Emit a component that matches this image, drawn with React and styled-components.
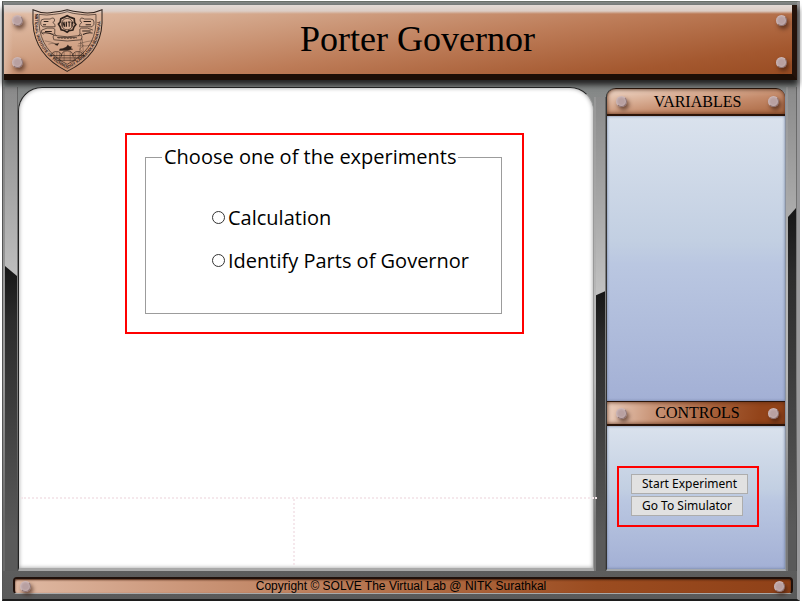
import React, { useState } from "react";
import styled, { createGlobalStyle, css } from "styled-components";

const GlobalStyle = createGlobalStyle`
  * { box-sizing: border-box; }
  body { margin: 0; background: #fff; color: #000; }
`;

const serif = '"Liberation Serif", "Times New Roman", serif';
const hand = '"Comic Sans MS", "Open Sans", "Noto Sans", cursive';
const ui = 'Tahoma, "Noto Sans", "DejaVu Sans Condensed", sans-serif';

const Page = styled.div`
  min-height: 100vh;
  padding: 1px 2px 2px;
  display: flex;
`;

const Frame = styled.div`
  flex: 1;
  min-width: 0;
  display: flex;
  flex-direction: column;
  border: 1px solid #555;
  border-top: 1px solid #6c726c;
  border-right: 3px solid #99999b;
  border-bottom: 2px solid #1c1c1c;
  background: linear-gradient(#858988 0, #858988 80px, #8a8a8a 120px, #5a5a5a 100%);
`;

const Header = styled.header`
  height: 75px;
  margin: 3px 0 0 1px;
  display: flex;
  align-items: flex-start;
  gap: 9px;
  padding: 4px 5px 0 8px;
  border-bottom: 6px solid #1d0e06;
  border-right: 5px solid #24120a;
  background:
    linear-gradient(#e3dad6 0, #dccdc5 6px, transparent 9px),
    linear-gradient(90deg, #e8cdbd88 0, transparent 9px),
    linear-gradient(172deg, #e6c4ae 0%, #d6ab90 22%, #bd7c58 56%, #a4582f 85%, #994c22 100%);
  box-shadow: 0 4px 6px 1px #222;
  position: relative;
`;

const Rivets = styled.div`
  height: 60px;
  padding: 6px 0 1px;
  display: flex;
  flex-direction: column;
  justify-content: space-between;
`;

const Rivet = styled.span`
  flex: none;
  width: 11px;
  height: 11px;
  border-radius: 50%;
  border: 1px solid #8d7475;
  border-top-color: #cbb6b7;
  border-left-color: #c8b3b4;
  background: radial-gradient(circle at 50% 50%, #b8a0a1 40%, #c4afb0 75%);
  box-shadow: 2px 3px 4px #3a1c10aa;
`;

const Crest = styled.svg`
  flex: none;
  width: 71px;
  height: 63px;
`;

const Title = styled.h1`
  flex: 1;
  margin: 0;
  padding-right: 44px;
  padding-top: 10px;
  font: 400 36px/40px ${serif};
  text-align: center;
`;

const Body = styled.div`
  flex: 1;
  display: grid;
  grid-template-columns: 15px minmax(0, 1fr) 12px 180px 11px;
  padding-top: 7px;
`;

const Gutter = styled.div`
  margin-top: ${(p) => (p.$side === "middle" ? 10 : 0)}px;
  border-left: 2px solid ${(p) => (p.$side === "left" ? "#77777788" : "#aaaaaa66")};
  border-right: 1px solid #44444488;
  background: linear-gradient(#8a8a8a 0, #a6a6a6 22%, #c2c2c2 42%, #c2c2c2 60%, #5a5a5a 90%);
  display: flex;
  flex-direction: column;
  justify-content: flex-end;
`;

const slopes = {
  left: "polygon(0 0, 100% 10px, 100% 100%, 0 100%)",
  middle: "polygon(0 4px, 100% 0, 100% 100%, 0 100%)",
  right: "polygon(0 9px, 100% 0, 100% 100%, 0 100%)",
};
const depths = { left: "63%", middle: "59%", right: "75%" };

const Shade = styled.div`
  height: ${(p) => depths[p.$side]};
  clip-path: ${(p) => slopes[p.$side]};
  background: linear-gradient(#161616 0, #2c2c2c 18%, #3c3c3c 45%, #5a5a5a 88%);
`;

const Board = styled.main`
  display: flex;
  flex-direction: column;
  border: 1px solid #222;
  border-bottom: 3px solid #a9a9a9;
  border-right-color: #999;
  border-radius: 24px 24px 0 0;
  background: #fff;
  box-shadow: inset 0 0 4px #999;
  position: relative;
  z-index: 1;
`;

const Workspace = styled.div`
  flex: 1;
  padding: 45px 0 0 106px;
`;

const highlight = css`
  border: 2px solid #f00;
`;

const Choice = styled.form`
  ${highlight}
  width: 399px;
  max-width: 100%;
  height: 201px;
  padding: 11px 20px 19px 18px;
`;

const Options = styled.fieldset`
  height: 168px;
  min-width: 0;
  margin: 0;
  padding: 28px 0 0 66px;
  border: 1px solid #9c9c9c;
  font: 400 20px/22px ${hand};
`;

const Legend = styled.legend`
  margin-left: -50px;
  padding: 0 2px;
`;

const Option = styled.label`
  display: flex;
  align-items: center;
  gap: 3px;
  height: 43px;
  white-space: nowrap;
`;

const Radio = styled.input`
  appearance: none;
  flex: none;
  width: 13px;
  height: 13px;
  margin: 0;
  border: 1px solid #333;
  border-radius: 50%;
  background: #fff;
  &:checked { background: radial-gradient(circle, #222 40%, #fff 50%); }
`;

const Notes = styled.div`
  height: 71px;
  margin: 0 -4px 0 2px;
  border-top: 2px dotted #f5e8ec;
`;

const NotesColumn = styled.div`
  width: 274px;
  height: 66px;
  border-right: 2px dotted #f5e8ec;
`;

const Sidebar = styled.aside`
  display: flex;
  flex-direction: column;
  margin-top: 1px;
  border-left: 1px solid #333;
  border-bottom: 2px solid #a4a8ae;
  border-right: 1px solid #8b929f;
  border-radius: 9px 9px 0 0;
`;

const Plate = styled.h2`
  margin: 0;
  height: ${(p) => (p.$top ? 28 : 25)}px;
  padding: 0 6px 0 9px;
  display: flex;
  align-items: center;
  justify-content: space-between;
  border: 2px solid #2b1408;
  border-width: 1px 0 2px;
  border-radius: ${(p) => (p.$top ? "9px 9px 0 0" : "0")};
  font: 400 16px/20px ${serif};
  background: ${(p) =>
    p.$top
      ? "linear-gradient(172deg, #efd9cb 0%, #dcb49c 28%, #c48a6a 60%, #a9663f 100%)"
      : "linear-gradient(100deg, #ecd0bf 0%, #c99578 26%, #a65f38 60%, #93441a 85%)"};
  box-shadow: inset 0 0 4px #5a2c14;
`;

const Pane = styled.section`
  flex: ${(p) => (p.$fill ? "1" : "none")};
  height: ${(p) => (p.$fill ? "auto" : "143px")};
  padding: 40px 0 0 10px;
  background: linear-gradient(#dae2ed 0%, #c2cfe2 44%, #bac7e1 52%, #a3b0d5 100%);
  box-shadow: inset 0 0 3px #66779a;
`;

const Actions = styled.div`
  ${highlight}
  width: 142px;
  height: 61px;
  padding: 6px 12px;
  display: flex;
  flex-direction: column;
  align-items: flex-start;
  gap: 2px;
`;

const Button = styled.button`
  height: 20px;
  padding: 0 10px;
  border: 1px solid #adadad;
  border-radius: 0;
  background: #e1e1e1;
  color: #000;
  font: 400 12px/18px ${ui};
  white-space: nowrap;
`;

const Footer = styled.footer`
  height: 17px;
  margin: 6px 4px 5px 10px;
  padding: 0 6px 0 5px;
  display: flex;
  align-items: center;
  justify-content: space-between;
  border: 2px solid #20100a;
  border-bottom: 1px solid #aaa;
  border-radius: 4px;
  font: 400 12px/14px "Liberation Sans", Arial, sans-serif;
  background: linear-gradient(90deg, #dfb9a3 0%, #cb9679 22%, #b26f48 50%, #9b4c20 75%, #8f4118 100%);
  box-shadow: inset 0 1px 2px #4a2412;
`;

const Copyright = styled.span`
  margin-right: 3px;
`;

function Emblem() {
  return (
    <Crest viewBox="0 0 210 188" fill="none" stroke="#2e211b" strokeWidth="3" role="img" aria-label="NITK crest">
      <path d="M2 2 Q32 16 62 10 Q88 7 104 2 Q120 7 146 10 Q178 16 208 2 V42 Q204 138 104 186 Q6 138 2 42Z" />
      <path strokeWidth="2" d="M20 16 Q44 20 64 16 Q88 14 104 8 Q120 14 144 16 Q166 20 190 16 V44 Q185 125 104 165 Q25 125 20 44Z" />
      <path id="crest-band" stroke="none" d="M7 14 V42 Q10 132 104 178 Q200 132 203 42 V12" />
      <text fill="#2e211b" stroke="none" fontFamily="Liberation Sans, sans-serif" fontSize="12" fontWeight="700">
        <textPath href="#crest-band">NATIONAL INSTITUTE OF TECHNOLOGY KARNATAKA SURATHKAL</textPath>
      </text>
      <path strokeWidth="5" d="M94 25 104 20l10 5 11 4 1 11 4 6-6 8-3 9-12 2-5 4-9-5-9-2-3-9-5-8 5-6 2-10z" />
      <circle cx="104" cy="45" r="17" strokeWidth="2" />
      <path strokeWidth="3" d="M91 53V38l6 15V38M102 38v15M106 39h8M110 39v14M118 38v15M118 46l4-7" />
      <path strokeWidth="2" d="M25 39q0-9 10-9h18q10-6 13 0 3 8-5 10 9 5 7 13H31q-8-6-6-14zM28 63q15-9 34-6 8 1 5 11-3 7 5 12M28 63q-4 8 5 13M184 39q0-9-10-9h-18q-10-6-13 0-3 8 5 10-9 5-7 13h37q8-6 6-14zM181 63q-15-9-34-6-8 1-5 11 3 7-5 12" />
      <path strokeWidth="3" d="M34 37h14M32 47h9M38 67h20M153 37h22M159 47h16M149 66h25M28 72q18-4 34 4M151 76q16-7 29-4" />
      <path strokeWidth="2" d="M65 73q-6 11 0 20M145 73q7 11 0 20M65 79q39 8 80 0M66 92q38 7 78 0M74 85h58" />
      <path strokeWidth="2" strokeDasharray="6 3" d="M76 86q28 4 57 0" />
      <path strokeWidth="1" d="M37 95q19 2 37 11M48 105q20-6 28 2M137 104q28-9 50-10M135 110q28 3 51-5M146 88l-7 61M149 88l5 61M143 99l9 11-11 10 12 10-14 10" />
      <path fill="#2e211b" strokeWidth="1" d="M82 119q20-1 24-12 2 7 11 5-4 8 4 8-17 5-40 4zM67 106l12-4-4 7z" />
      <path strokeWidth="2" d="M57 141q0-14 15-14t15 14M87 141q0-16 17-16t17 16M121 141q0-14 15-14t17 14M53 139h104M64 146h80M76 153h55" />
      <path strokeWidth="1" d="M65 130v20M73 128v29M81 131v27M95 128v28M113 128v30M128 131v24M137 128v22M146 132v13M86 139q-8 10 0 20M121 139q9 10 0 20" />
    </Crest>
  );
}

const experiments = [
  { id: "calculation", label: "Calculation" },
  { id: "parts", label: "Identify Parts of Governor" },
];

export default function App() {
  const [selected, setSelected] = useState("");
  return (
    <>
      <GlobalStyle />
      <Page>
        <Frame>
          <Header>
            <Rivets><Rivet /><Rivet /></Rivets>
            <Emblem />
            <Title>Porter Governor</Title>
            <Rivets><Rivet /><Rivet /></Rivets>
          </Header>
          <Body>
            <Gutter $side="left"><Shade $side="left" /></Gutter>
            <Board>
              <Workspace>
                <Choice>
                  <Options>
                    <Legend>Choose one of the experiments</Legend>
                    {experiments.map((e) => (
                      <Option key={e.id} htmlFor={e.id}>
                        <Radio
                          type="radio"
                          name="experiment"
                          id={e.id}
                          checked={selected === e.id}
                          onChange={() => setSelected(e.id)}
                        />
                        {e.label}
                      </Option>
                    ))}
                  </Options>
                </Choice>
              </Workspace>
              <Notes><NotesColumn /></Notes>
            </Board>
            <Gutter $side="middle"><Shade $side="middle" /></Gutter>
            <Sidebar>
              <Plate $top><Rivet />VARIABLES<Rivet /></Plate>
              <Pane $fill />
              <Plate><Rivet />CONTROLS<Rivet /></Plate>
              <Pane>
                <Actions>
                  <Button type="button">Start Experiment</Button>
                  <Button type="button">Go To Simulator</Button>
                </Actions>
              </Pane>
            </Sidebar>
            <Gutter $side="right"><Shade $side="right" /></Gutter>
          </Body>
          <Footer>
            <Rivet />
            <Copyright>Copyright © SOLVE The Virtual Lab @ NITK Surathkal</Copyright>
            <Rivet />
          </Footer>
        </Frame>
      </Page>
    </>
  );
}
